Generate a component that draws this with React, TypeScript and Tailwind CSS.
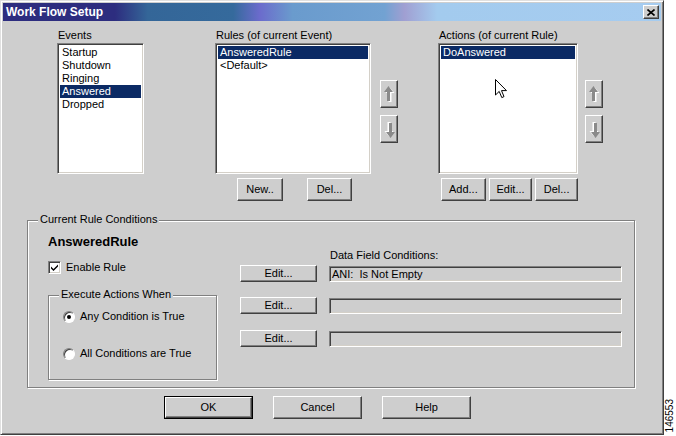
import React from "react";

const raised =
  "border border-t-white border-l-white border-r-[#404040] border-b-[#404040] shadow-[inset_-1px_-1px_0_#808080]";
const sunken =
  "border border-t-[#808080] border-l-[#808080] border-r-white border-b-white shadow-[inset_1px_1px_0_#404040,inset_-1px_-1px_0_#d4d0c8]";

const Btn = ({ label, className = "" }: { label: string; className?: string }) => (
  <button className={`flex items-center justify-center bg-[#cecece] leading-none ${raised} ${className}`}>
    {label}
  </button>
);

const ListBox = ({
  items,
  selected,
  className = "",
  children,
}: {
  items: string[];
  selected: number;
  className?: string;
  children?: React.ReactNode;
}) => (
  <div className={`relative h-[131px] bg-white p-[2px] ${sunken} ${className}`}>
    {items.map((it, i) => (
      <div
        key={it}
        className={`h-[13px] pl-[2px] leading-[13px] ${i === selected ? "bg-[#0b2a64] text-white" : ""}`}
      >
        {it}
      </div>
    ))}
    {children}
  </div>
);

const Arrow = ({ down }: { down?: boolean }) => (
  <svg width="11" height="17" viewBox="0 0 11 17" className={down ? "rotate-180" : ""}>
    <polygon points="5.5,1 10.5,7 7.5,7 7.5,16 4.5,16 4.5,7 1.5,7" fill="#ffffff" />
    <polygon points="4.5,0 9,6 6,6 6,15 3,15 3,6 0,6" fill="#8a8a8a" />
  </svg>
);

const ArrowCol = ({ className = "" }: { className?: string }) => (
  <div className={`flex w-[18px] flex-col gap-[7px] pt-[51px] ${className}`}>
    <div className={`flex h-[28px] items-center justify-center pl-[1px] bg-[#cecece] ${raised}`}>
      <Arrow />
    </div>
    <div className={`flex h-[28px] items-center justify-center pl-[1px] bg-[#cecece] ${raised}`}>
      <Arrow down />
    </div>
  </div>
);

const Radio = ({ on }: { on?: boolean }) => (
  <div className="flex h-[12px] w-[12px] items-center justify-center rounded-full border border-t-[#808080] border-l-[#808080] border-r-white border-b-white bg-white shadow-[inset_1px_1px_0_#404040]">
    {on && <div className="h-[4px] w-[4px] rounded-full bg-black" />}
  </div>
);

const Field = ({ text = "" }: { text?: string }) => (
  <div className={`h-[16px] w-[293px] whitespace-pre pl-[2px] leading-[14px] ${sunken}`}>{text}</div>
);

export default function App() {
  return (
    <div className="flex h-[436px] w-[676px] bg-white font-['Liberation_Sans',Arial,sans-serif] text-[11px] text-black">
      <div className="flex h-[435px] w-[664px] flex-col border border-t-[#e0e0e0] border-l-[#e0e0e0] border-r-[#404040] border-b-[#404040] bg-[#cecece] shadow-[inset_1px_1px_0_#fff,inset_-1px_-1px_0_#808080]">
        {/* title bar */}
        <div className="mx-[2px] mt-[2px] flex h-[18px] items-center justify-between bg-[linear-gradient(to_right,#2d2d7f_0%,#2d2d7f_17%,#346698_22%,#356a9c_35%,#6b6bcc_39%,#6a9bcd_44%,#72a2d2_58%,#a09fd2_61%,#a3cbee_66%,#a6ccf0_100%)] pl-[3px] pr-[2px]">
          <span className="text-[12px] font-bold text-white">Work Flow Setup</span>
          <div className={`flex h-[14px] w-[16px] items-center justify-center bg-[#cecece] ${raised}`}>
            <svg width="8" height="7" viewBox="0 0 8 7">
              <path d="M0.5 0.5 L7.5 6.5 M7.5 0.5 L0.5 6.5" stroke="#000" strokeWidth="1.6" />
            </svg>
          </div>
        </div>

        {/* top section */}
        <div className="mt-[8px] flex items-start pl-[56px]">
          <div className="w-[87px]">
            <div className="h-[14px] pl-[1px] leading-[13px]">Events</div>
            <ListBox items={["Startup", "Shutdown", "Ringing", "Answered", "Dropped"]} selected={3} />
          </div>

          <div className="ml-[71px] w-[156px]">
            <div className="h-[14px] pl-[1px] leading-[13px]">Rules (of current Event)</div>
            <ListBox items={["AnsweredRule", "<Default>"]} selected={0} />
            <div className="mt-[4px] flex gap-[24px] pl-[22px]">
              <Btn label="New.." className="h-[23px] w-[46px]" />
              <Btn label="Del..." className="h-[23px] w-[45px]" />
            </div>
          </div>
          <ArrowCol className="ml-[9px]" />

          <div className="ml-[40px] w-[140px]">
            <div className="h-[14px] pl-[1px] leading-[13px]">Actions (of current Rule)</div>
            <ListBox items={["DoAnswered"]} selected={0}>
              <svg
                width="12"
                height="20"
                viewBox="0 0 12 20"
                className="absolute left-[56px] top-[35px]"
              >
                <path
                  d="M0.5 0.5 L0.5 16 L4.2 12.4 L6.8 18.6 L9 17.6 L6.5 11.6 L11.5 11.6 Z"
                  fill="#fff"
                  stroke="#000"
                  strokeWidth="1"
                />
              </svg>
            </ListBox>
            <div className="mt-[4px] flex gap-[3px] pl-[3px]">
              <Btn label="Add..." className="h-[23px] w-[45px]" />
              <Btn label="Edit..." className="h-[23px] w-[44px]" />
              <Btn label="Del..." className="h-[23px] w-[43px]" />
            </div>
          </div>
          <ArrowCol className="ml-[7px]" />
        </div>

        {/* current rule conditions */}
        <div className="relative ml-[26px] mt-[19px] flex h-[168px] w-[608px] border border-[#808080] shadow-[1px_1px_0_#fff,inset_1px_1px_0_#fff] pl-[20px] pt-[13px]">
          <span className="absolute left-[10px] top-[-8px] bg-[#cecece] px-[2px] leading-[13px]">
            Current Rule Conditions
          </span>

          <div className="flex w-[169px] flex-col">
            <div className="h-[16px] text-[13px] font-bold leading-[16px]">AnsweredRule</div>
            <div className="mt-[11px] flex h-[13px] items-center gap-[5px]">
              <div className={`flex h-[13px] w-[13px] items-center justify-center bg-white ${sunken}`}>
                <svg width="7" height="7" viewBox="0 0 7 7">
                  <path d="M0 2.5 L2.5 5 L7 0.5 L7 2.5 L2.5 7 L0 4.5 Z" fill="#000" />
                </svg>
              </div>
              <span className="leading-[13px]">Enable Rule</span>
            </div>

            <div className="relative mt-[21px] h-[85px] border border-[#808080] shadow-[1px_1px_0_#fff,inset_1px_1px_0_#fff] pl-[14px] pt-[14px]">
              <span className="absolute left-[10px] top-[-8px] bg-[#cecece] px-[2px] leading-[13px]">
                Execute Actions When
              </span>
              <div className="flex h-[13px] items-center gap-[5px]">
                <Radio on />
                <span>Any Condition is True</span>
              </div>
              <div className="mt-[24px] flex h-[13px] items-center gap-[5px]">
                <Radio />
                <span>All Conditions are True</span>
              </div>
            </div>
          </div>

          <div className="ml-[23px] flex flex-col pt-[15px]">
            <div className="h-[13px] pl-[90px] leading-[13px]">Data Field Conditions:</div>
            <div className="mt-[3px] flex items-center gap-[12px]">
              <Btn label="Edit..." className="h-[17px] w-[77px]" />
              <Field text="ANI:  Is Not Empty" />
            </div>
            <div className="mt-[15px] flex items-center gap-[12px]">
              <Btn label="Edit..." className="h-[17px] w-[77px]" />
              <Field />
            </div>
            <div className="mt-[16px] flex items-center gap-[12px]">
              <Btn label="Edit..." className="h-[17px] w-[77px]" />
              <Field />
            </div>
          </div>
        </div>

        {/* bottom buttons */}
        <div className="ml-[163px] mt-[8px] flex gap-[20px]">
          <div className="border border-black">
            <Btn label="OK" className="h-[21px] w-[87px]" />
          </div>
          <Btn label="Cancel" className="h-[23px] w-[89px]" />
          <Btn label="Help" className="h-[23px] w-[89px]" />
        </div>
      </div>

      <div className="flex w-[12px] flex-col items-center justify-end pb-[4px]">
        <span className="rotate-180 text-[10px] leading-none [writing-mode:vertical-rl]">146553</span>
      </div>
    </div>
  );
}
